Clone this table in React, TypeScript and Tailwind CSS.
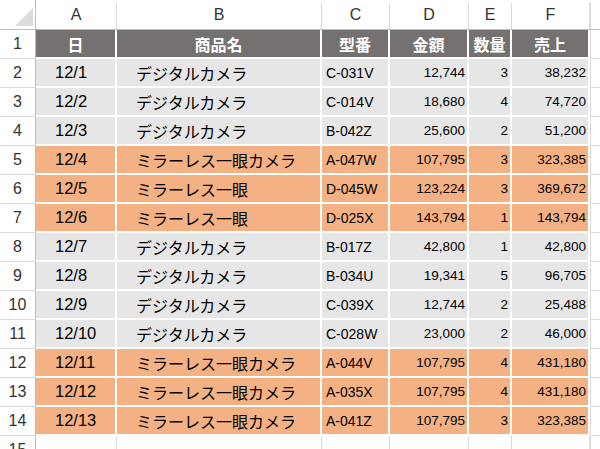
import React from "react";

const GRAY = "bg-[#e7e6e6]";
const ORANGE = "bg-[#f4b183]";

const rows = [
  ["12/1", "デジタルカメラ", "C-031V", "12,744", "3", "38,232"],
  ["12/2", "デジタルカメラ", "C-014V", "18,680", "4", "74,720"],
  ["12/3", "デジタルカメラ", "B-042Z", "25,600", "2", "51,200"],
  ["12/4", "ミラーレス一眼カメラ", "A-047W", "107,795", "3", "323,385"],
  ["12/5", "ミラーレス一眼", "D-045W", "123,224", "3", "369,672"],
  ["12/6", "ミラーレス一眼", "D-025X", "143,794", "1", "143,794"],
  ["12/7", "デジタルカメラ", "B-017Z", "42,800", "1", "42,800"],
  ["12/8", "デジタルカメラ", "B-034U", "19,341", "5", "96,705"],
  ["12/9", "デジタルカメラ", "C-039X", "12,744", "2", "25,488"],
  ["12/10", "デジタルカメラ", "C-028W", "23,000", "2", "46,000"],
  ["12/11", "ミラーレス一眼カメラ", "A-044V", "107,795", "4", "431,180"],
  ["12/12", "ミラーレス一眼カメラ", "A-035X", "107,795", "4", "431,180"],
  ["12/13", "ミラーレス一眼カメラ", "A-041Z", "107,795", "3", "323,385"],
];

const jp = "font-['Noto_Sans_CJK_JP',sans-serif]";
const num = "font-['Liberation_Sans','Noto_Sans_CJK_JP',sans-serif]";

const RowHead = ({ n }: { n: number }) => (
  <div
    className={
      "h-[29px] flex items-center justify-center border-r border-b border-r-[#bdbdbd] border-b-[#dadada] text-[16px] text-[#333] " +
      num
    }
  >
    {n}
  </div>
);

const Rest = () => <div className="h-[29px] border-l border-b border-[#dadada]" />;

export default function App() {
  const cols = ["A", "B", "C", "D", "E", "F"];
  const heads = ["日", "商品名", "型番", "金額", "数量", "売上"];
  return (
    <div className="w-[600px] h-[449px] overflow-hidden bg-white">
      <div className="grid grid-cols-[36px_81px_205px_68px_79px_43px_78px_1fr]">
        {/* column header row */}
        <div className="h-[30px] border-r border-b border-[#bdbdbd] relative">
          <svg className="absolute left-[15px] top-[8px]" width="18" height="18" viewBox="0 0 18 18">
            <polygon points="0,18 18,18 18,0" fill="#dcdcdc" />
          </svg>
        </div>
        {cols.map((c) => (
          <div key={c} className="h-[30px] flex items-end border-b border-[#bdbdbd]">
            <div
              className={
                "h-[26px] w-full flex items-center justify-center pb-[3px] border-r border-[#dadada] text-[16px] text-[#333] " +
                num
              }
            >
              {c}
            </div>
          </div>
        ))}
        <div className="h-[30px] flex items-end border-b border-[#bdbdbd]">
          <div className="h-[26px] w-full border-l border-[#dadada]" />
        </div>

        {/* row 1 headers */}
        <RowHead n={1} />
        {heads.map((h) => (
          <div
            key={h}
            className={
              "h-[29px] flex items-center justify-center bg-[#767171] border-r-2 border-b-2 border-white text-white font-bold text-[16px] leading-none " +
              jp
            }
          >
            {h}
          </div>
        ))}
        <Rest />

        {rows.map((r, i) => {
          const bg = r[1].startsWith("ミラー") ? ORANGE : GRAY;
          const cell = "h-[29px] flex items-center border-r-2 border-b-2 border-white text-black leading-none " + bg + " ";
          return (
            <React.Fragment key={r[0]}>
              <RowHead n={i + 2} />
              <div className={cell + "pl-[19px] text-[16.5px] " + num}>{r[0]}</div>
              <div className={cell + "pl-[19px] text-[16px] " + jp}>{r[1]}</div>
              <div className={cell + "pl-[4px] text-[14px] " + num}>{r[2]}</div>
              <div className={cell + "justify-end pr-[2px] text-[13.5px] " + num}>{r[3]}</div>
              <div className={cell + "justify-end pr-[2px] text-[13.5px] " + num}>{r[4]}</div>
              <div className={cell + "justify-end pr-[2px] text-[13.5px] " + num}>{r[5]}</div>
              <Rest />
            </React.Fragment>
          );
        })}

        {/* row 15 */}
        <RowHead n={15} />
        {cols.map((c) => (
          <div key={c} className="h-[29px] border-r border-b border-[#dadada]" />
        ))}
        <Rest />
      </div>
    </div>
  );
}
